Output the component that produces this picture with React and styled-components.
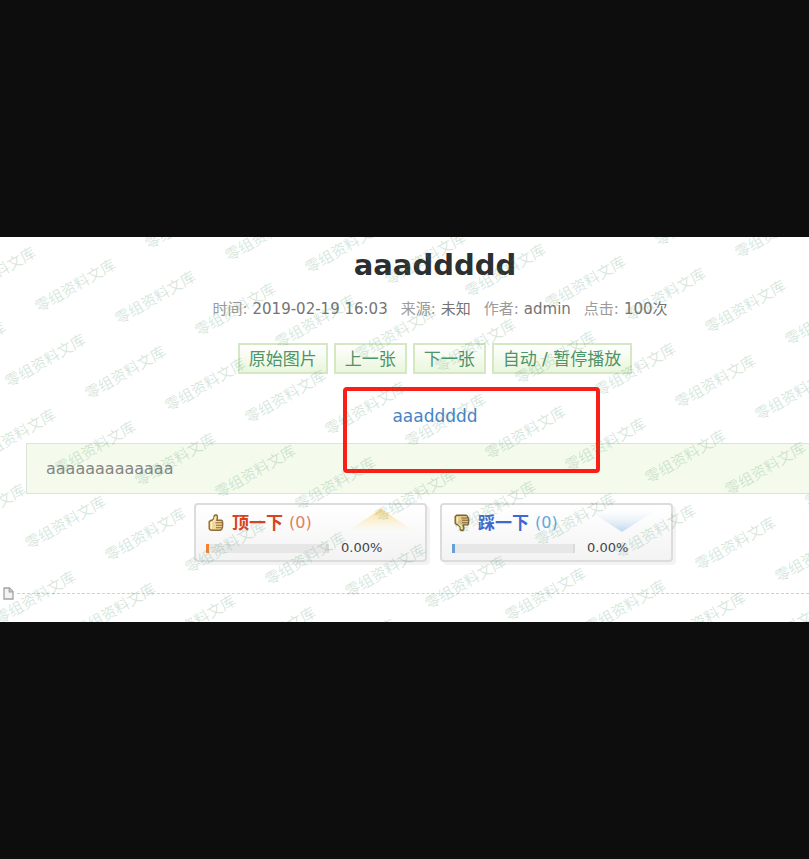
import React from "react";
import styled, { createGlobalStyle, css } from "styled-components";

const GlobalStyle = createGlobalStyle`
  *, *::before, *::after { box-sizing: border-box; }
  body {
    margin: 0;
    background: #0d0d0d;
    font-family: "DejaVu Sans", "Noto Sans CJK SC", sans-serif;
    color: #777777;
  }
`;

const Stage = styled.main`
  min-height: 100vh;
  display: flex;
  flex-direction: column;
  justify-content: center;
`;

const Sheet = styled.article`
  position: relative;
  overflow: hidden;
  background: #ffffff;
`;

const Content = styled.div`
  margin-left: 26px;
  margin-right: -35px;
  display: flex;
  flex-direction: column;
  align-items: center;
`;

const Title = styled.h1`
  margin: 8px 0 0;
  font-size: 29px;
  line-height: 40px;
  color: #2b2f2f;
`;

const Meta = styled.dl`
  margin: 13px 0 0;
  padding-left: 10px;
  display: flex;
  gap: 13px;
  font-size: 15px;
  line-height: 22px;
`;

const MetaItem = styled.div`
  display: flex;
  gap: 5px;
`;

const MetaLabel = styled.dt`
  color: #9b9b9b;
`;

const MetaValue = styled.dd`
  margin: 0;
  color: #747474;
`;

const Toolbar = styled.div`
  margin-top: 23px;
  display: flex;
  gap: 6px;
`;

const ToolButton = styled.button`
  height: 31px;
  padding: 0 9px;
  border: 2px solid #d3e8c3;
  background: linear-gradient(#ffffff, #e9f6db);
  color: #4c9469;
  font: inherit;
  font-size: 17px;
  line-height: 24px;
  white-space: nowrap;
  cursor: pointer;
`;

const Figure = styled.div`
  position: relative;
  margin-top: 28px;
  font-size: 17px;
  line-height: 28px;
`;

const ImageLink = styled.a`
  color: #4684c5;
  text-decoration: none;
`;

const Highlight = styled.span`
  position: absolute;
  top: -15px;
  left: -49px;
  width: 257px;
  height: 86px;
  border: 4px solid #fb1e16;
  border-radius: 4px;
  pointer-events: none;
`;

const Description = styled.p`
  align-self: stretch;
  margin: 13px 0 0;
  padding: 10px 19px;
  border: 1px solid #dde3da;
  background: #f4fbec;
  color: #858585;
  font-size: 16px;
  line-height: 29px;
`;

const Votes = styled.div`
  margin-top: 9px;
  padding-right: 3px;
  display: flex;
  gap: 13px;
`;

const voteTones = {
  up: { label: "#d8421f", count: "#de8061", mark: "#ef8434" },
  down: { label: "#3f69cf", count: "#62a9dc", mark: "#67a0d4" },
};

const VoteCard = styled.button`
  width: 233px;
  height: 59px;
  padding: 4px 11px 4px 10px;
  display: flex;
  flex-direction: column;
  justify-content: space-between;
  border: 2px solid #dcdcdc;
  border-radius: 4px;
  background: linear-gradient(#ffffff, #f3f3f3);
  box-shadow: 3px 3px 0 #f3f3f3;
  font: inherit;
  text-align: left;
  cursor: pointer;
`;

const VoteHead = styled.span`
  display: flex;
  align-items: center;
  align-self: stretch;
  padding-left: 2px;
  height: 28px;
`;

const VoteLabel = styled.strong`
  margin-left: 8px;
  font-size: 17px;
  line-height: 26px;
  font-weight: 700;
  color: ${({ $tone }) => voteTones[$tone].label};
`;

const VoteCount = styled.span`
  margin-left: 6px;
  font-size: 16px;
  line-height: 22px;
  color: ${({ $tone }) => voteTones[$tone].count};
`;

const Arrow = styled.svg`
  width: 70px;
  height: 24px;
  margin-left: auto;
  align-self: flex-start;
`;

const VoteStats = styled.span`
  display: flex;
  align-items: center;
  gap: 12px;
`;

const Track = styled.span`
  width: 123px;
  height: 9px;
  background: #e7e7e7;
  border-right: 2px solid #dadada;
  ${({ $tone }) => css`
    border-left: 3px solid ${voteTones[$tone].mark};
  `}
`;

const Percent = styled.span`
  color: #454545;
  font-size: 13px;
  line-height: 16px;
`;

const Footer = styled.footer`
  margin-top: 25px;
  padding: 0 0 22px 3px;
  display: flex;
  align-items: center;
  gap: 3px;
`;

const Divider = styled.hr`
  flex: 1;
  margin: 0;
  border: 0;
  border-top: 1px dashed #cfcfcf;
`;

const Icon = styled.svg`
  display: block;
  flex: none;
`;

const WatermarkLayer = styled.div`
  position: absolute;
  inset: 0;
  overflow: hidden;
  pointer-events: none;
  color: rgba(72, 138, 92, 0.22);
  font-family: "Noto Sans CJK SC", sans-serif;
  font-size: 15px;
  line-height: 20px;
`;

const Mark = styled.span`
  position: absolute;
  width: 90px;
  white-space: nowrap;
  transform: rotate(-30deg);
`;

const marks = [];
for (let row = -5; row <= 7; row += 1) {
  for (let col = -5; col <= 30; col += 1) {
    const left = 30 + col * 80 - row * 30;
    const top = 38 + col * 12 + row * 75;
    if (left > -90 && left < 2000 && top > -50 && top < 420) marks.push({ left, top });
  }
}

function Watermark() {
  return (
    <WatermarkLayer aria-hidden="true">
      {marks.map((m) => (
        <Mark key={`${m.left}/${m.top}`} style={m}>
          零组资料文库
        </Mark>
      ))}
    </WatermarkLayer>
  );
}

function ThumbUp() {
  return (
    <Icon width="16" height="18" viewBox="0 0 16 18" aria-hidden="true">
      <path
        d="M1.2 7.6 2.5 6.5 4.5 6 6 4.3V2.2L7 1h1.6l.8 1.2v2.2L8.8 6.3h4.7l1 1v1.5l.3 1.2-.3 1.4.1 1.5-.6 1.2-.3 1.2-1.2 1H4.8L2.4 16 1.2 14.8Z"
        fill="#f0d79a"
        stroke="#8f6a32"
        strokeWidth="1.4"
        strokeLinejoin="round"
      />
      <path d="M3.4 8v6.5M6.9 3v2.4L5 7.5" stroke="#fff3cf" strokeWidth="1.2" fill="none" />
      <path d="M7.5 8.8h6.6M8 11.3h6.2M8 13.7h5.6" stroke="#8f6a32" strokeWidth="1.1" />
    </Icon>
  );
}

function ThumbDown() {
  return (
    <Icon width="16" height="18" viewBox="0 0 16 18" aria-hidden="true">
      <path
        d="M1.2 2.6 2.6 1.3h9.6l1.3 1 .3 1.2.8 1-.1 1.4.3 1.3-.3 1.3v1.4l-1 1H9.1l.7 2v2.4L8.8 16.5H7.2L6.2 15v-2L4.6 11.2 2.5 10.5 1.2 9.2Z"
        fill="#e8cb8a"
        stroke="#80602f"
        strokeWidth="1.4"
        strokeLinejoin="round"
      />
      <path d="M3.4 3.2v6M4.6 10 7.3 12.5V15" stroke="#fff0c8" strokeWidth="1.2" fill="none" />
      <path d="M7.4 4h6.2M8 6.3h6.2M8 8.7h6.2" stroke="#80602f" strokeWidth="1.1" />
    </Icon>
  );
}

function UpArrow() {
  return (
    <Arrow viewBox="0 0 70 24" aria-hidden="true">
      <defs>
        <linearGradient id="upFade" x1="0" y1="0" x2="0" y2="1">
          <stop offset="0" stopColor="#fbd986" />
          <stop offset="1" stopColor="#fdf0d0" stopOpacity="0" />
        </linearGradient>
      </defs>
      <path d="M37 0 72 23H2Z" fill="url(#upFade)" />
    </Arrow>
  );
}

function DownArrow() {
  return (
    <Arrow viewBox="0 0 70 24" aria-hidden="true">
      <defs>
        <linearGradient id="downFade" x1="0" y1="0" x2="0" y2="1">
          <stop offset="0" stopColor="#eef5fb" stopOpacity="0" />
          <stop offset="1" stopColor="#bdd7ef" />
        </linearGradient>
      </defs>
      <path d="M-2 1H66L32 23Z" fill="url(#downFade)" />
    </Arrow>
  );
}

function PageIcon() {
  return (
    <Icon width="11" height="13" viewBox="0 0 11 13" aria-hidden="true">
      <path d="M1 1h5.5L10 4.5V12H1Z" fill="#f3f3f3" stroke="#a3a3a3" strokeWidth="1.3" />
      <path d="M6.2 1v3.8H10" fill="#c4c4c4" stroke="#a3a3a3" strokeWidth="1.2" />
    </Icon>
  );
}

const meta = [
  ["时间", "2019-02-19 16:03"],
  ["来源", "未知"],
  ["作者", "admin"],
  ["点击", "100次"],
];

const tools = ["原始图片", "上一张", "下一张", "自动 / 暂停播放"];

const votes = [
  { tone: "up", label: "顶一下", icon: <ThumbUp />, arrow: <UpArrow /> },
  { tone: "down", label: "踩一下", icon: <ThumbDown />, arrow: <DownArrow /> },
];

export default function App() {
  return (
    <>
      <GlobalStyle />
      <Stage>
        <Sheet lang="zh-CN">
          <Content>
            <Title>aaaddddd</Title>
            <Meta>
              {meta.map(([label, value]) => (
                <MetaItem key={label}>
                  <MetaLabel>{label}:</MetaLabel>
                  <MetaValue>{value}</MetaValue>
                </MetaItem>
              ))}
            </Meta>
            <Toolbar>
              {tools.map((tool) => (
                <ToolButton key={tool} type="button">
                  {tool}
                </ToolButton>
              ))}
            </Toolbar>
            <Figure>
              <ImageLink href="#image">aaaddddd</ImageLink>
              <Highlight />
            </Figure>
            <Description>aaaaaaaaaaaaa</Description>
            <Votes>
              {votes.map(({ tone, label, icon, arrow }) => (
                <VoteCard key={tone} type="button">
                  <VoteHead>
                    {icon}
                    <VoteLabel $tone={tone}>{label}</VoteLabel>
                    <VoteCount $tone={tone}>(0)</VoteCount>
                    {arrow}
                  </VoteHead>
                  <VoteStats>
                    <Track $tone={tone} />
                    <Percent>0.00%</Percent>
                  </VoteStats>
                </VoteCard>
              ))}
            </Votes>
          </Content>
          <Footer>
            <PageIcon />
            <Divider />
          </Footer>
          <Watermark />
        </Sheet>
      </Stage>
    </>
  );
}
